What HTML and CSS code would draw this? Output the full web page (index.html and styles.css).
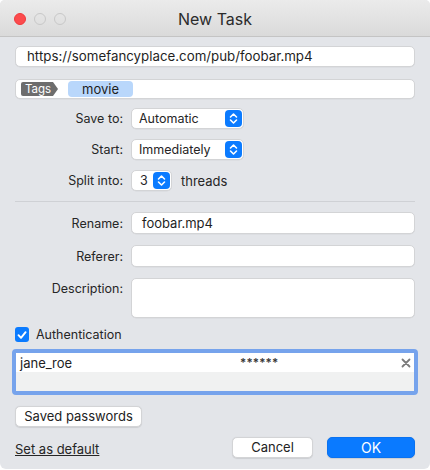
FILE: index.html
```html
<!DOCTYPE html>
<html lang="en">
<head>
<meta charset="utf-8">
<title>New Task</title>
<link rel="stylesheet" href="styles.css">
</head>
<body>
<div class="window">
  <div class="titlebar">
    <div class="lights">
      <span class="light red"></span>
      <span class="light"></span>
      <span class="light"></span>
    </div>
    <div class="title">New Task</div>
    <div></div>
  </div>
  <div class="content">
    <div class="field url">https://somefancyplace.com/pub/foobar.mp4</div>
    <div class="field tags">
      <span class="tag-label">Tags</span>
      <span class="chip">movie</span>
    </div>

    <div class="form options">
      <div class="label">Save to:</div>
      <div class="select wide"><span>Automatic</span><span class="stepper"><svg viewBox="0 0 17 17" width="17" height="17"><path d="M5.5 7 8.5 4 11.5 7M5.5 10 8.5 13 11.5 10" fill="none" stroke="#fff" stroke-width="1.6" stroke-linecap="round" stroke-linejoin="round"/></svg></span></div>
      <div class="label">Start:</div>
      <div class="select wide"><span>Immediately</span><span class="stepper"><svg viewBox="0 0 17 17" width="17" height="17"><path d="M5.5 7 8.5 4 11.5 7M5.5 10 8.5 13 11.5 10" fill="none" stroke="#fff" stroke-width="1.6" stroke-linecap="round" stroke-linejoin="round"/></svg></span></div>
      <div class="label">Split into:</div>
      <div class="split">
        <div class="select narrow"><span>3</span><span class="stepper"><svg viewBox="0 0 17 17" width="17" height="17"><path d="M5.5 7 8.5 4 11.5 7M5.5 10 8.5 13 11.5 10" fill="none" stroke="#fff" stroke-width="1.6" stroke-linecap="round" stroke-linejoin="round"/></svg></span></div>
        <span class="unit">threads</span>
      </div>
    </div>

    <div class="sep"></div>

    <div class="form details">
      <div class="label">Rename:</div>
      <div class="field input">foobar.mp4</div>
      <div class="label">Referer:</div>
      <div class="field input"></div>
      <div class="label top">Description:</div>
      <div class="field textarea"></div>
    </div>

    <div class="check">
      <span class="box"><svg viewBox="0 0 14 14" width="14" height="14"><path d="M3.5 7.2 6 9.8 10.6 4.2" fill="none" stroke="#fff" stroke-width="1.9" stroke-linecap="round" stroke-linejoin="round"/></svg></span>
      <span>Authentication</span>
    </div>

    <div class="auth">
      <div class="auth-row">
        <span class="user">jane_roe</span>
        <span class="pass">******</span>
        <span class="del"><svg viewBox="0 0 10 10" width="10" height="10"><path d="M1.5 1.5 8.5 8.5M8.5 1.5 1.5 8.5" stroke="#7b7b7b" stroke-width="1.8" stroke-linecap="round"/></svg></span>
      </div>
      <div class="auth-empty"></div>
    </div>

    <div class="btn saved">Saved passwords</div>

    <div class="footer">
      <a class="link">Set as default</a>
      <div class="actions">
        <div class="btn cancel">Cancel</div>
        <div class="btn primary">OK</div>
      </div>
    </div>
  </div>
</div>
</body>
</html>
```
FILE: styles.css
```css
* { box-sizing: border-box; }
html, body { margin: 0; padding: 0; background: #ffffff; }
body {
  font-family: Inter, "Liberation Sans", sans-serif;
  font-size: 12.5px;
  color: #262626;
}
.window {
  width: 430px;
  height: 469px;
  background: #e3e5e9;
  border-radius: 5px 5px 6px 6px;
  overflow: hidden;
}
.titlebar {
  height: 37px;
  display: grid;
  grid-template-columns: 1fr auto 1fr;
  align-items: center;
  background: linear-gradient(#ebebeb, #dadada);
  border-bottom: 1px solid #c4c4c4;
}
.lights { display: flex; gap: 8px; padding-left: 14px; padding-top: 2px; }
.light {
  width: 12px; height: 12px; border-radius: 50%;
  border: 1px solid #c8c8c8;
  background: transparent;
}
.light.red { background: #fc4b4d; border-color: #f0393c; }
.title { font-size: 16px; color: #2b2b2b; padding-top: 1px; }

.content { padding: 0 15px; }

.field {
  background: #fff;
  border: 1px solid #d3d4d6;
  border-radius: 5px;
  box-shadow: 0 0.5px 0.5px rgba(0,0,0,0.06);
}
.url {
  margin-top: 9px;
  height: 21px;
  line-height: 19px;
  padding-left: 11px;
  font-size: 13.3px;
  color: #1f1f1f;
}
.tags {
  margin-top: 12px;
  height: 20px;
  display: flex;
  align-items: center;
  padding-left: 5px;
  gap: 15px;
}
.tag-label {
  position: relative;
  height: 14px;
  line-height: 14px;
  padding: 0 0 0 4px;
  width: 32px;
  background: #6d6d6d;
  color: #fff;
  font-size: 11.5px;
  border-radius: 2px 0 0 2px;
}
.tag-label::after {
  content: "";
  position: absolute;
  right: -5px; top: 0;
  border-top: 7px solid transparent;
  border-bottom: 7px solid transparent;
  border-left: 5px solid #6d6d6d;
}
.chip {
  width: 65px;
  height: 16px;
  line-height: 16px;
  text-align: center;
  background: #b9d7fb;
  border-radius: 4px;
  font-size: 13px;
  color: #1e1e1e;
}

.form {
  display: grid;
  grid-template-columns: 108px 1fr;
  column-gap: 8px;
  align-items: center;
}
.options { margin-top: 9px; row-gap: 10px; grid-template-columns: 108px auto; justify-content: start; }
.label { text-align: right; color: #262626; }
.label.top { align-self: start; padding-top: 3px; }

.select {
  height: 21px;
  background: #fff;
  border: 1px solid #d3d4d6;
  border-radius: 5px;
  display: flex;
  align-items: center;
  justify-content: space-between;
  padding-left: 7px;
  padding-right: 1px;
  box-shadow: 0 0.5px 0.5px rgba(0,0,0,0.06);
}
.select.wide { width: 113px; }
.select.narrow { width: 41px; padding-left: 8px; }
.stepper {
  width: 17px; height: 17px;
  background: #0b7bff;
  border-radius: 4px;
  display: flex;
}
.split { display: flex; align-items: center; gap: 9px; }
.unit { color: #262626; font-size: 13px; }

.sep { height: 1px; background: #cfd1d5; margin: 10px 0 10px; }

.details { row-gap: 11px; }
.input { height: 22px; line-height: 20px; padding-left: 10px; font-size: 13px; color: #1f1f1f; }
.textarea { height: 40px; }

.check {
  margin-top: 9px;
  display: flex;
  align-items: center;
  gap: 7px;
  height: 15px;
}
.box {
  width: 14px; height: 15px;
  background: #0b7bff;
  border-radius: 3px;
  display: flex;
  align-items: center;
  justify-content: center;
}

.auth {
  margin: 7px -3px 0;
  height: 46px;
  border: 4px solid #76a3ec;
  border-radius: 4px;
  background: #f0f1f1;
}
.auth-row {
  height: 19px;
  background: #fff;
  display: grid;
  grid-template-columns: 220px 1fr 12px;
  align-items: center;
  padding: 0 4px;
}
.user { color: #222; font-size: 13px; }
.pass { font-size: 11.5px; font-weight: 600; color: #333; letter-spacing: 0.2px; }
.del { display: flex; justify-content: flex-end; margin-right: -1px; }

.btn {
  height: 21px;
  line-height: 19px;
  text-align: center;
  background: #fff;
  border: 1px solid #d3d4d6;
  border-radius: 5px;
  box-shadow: 0 0.5px 1px rgba(0,0,0,0.1);
  color: #222;
}
.saved { margin-top: 11px; width: 127px; font-size: 13px; }
.footer {
  margin-top: 10px;
  display: flex;
  justify-content: space-between;
  align-items: center;
}
.link { text-decoration: underline; color: #262626; margin-top: 3px; font-size: 13px; }
.actions { display: flex; gap: 14px; }
.cancel { width: 81px; font-size: 13px; }
.primary {
  width: 88px;
  background: #0a7aff;
  border-color: #0a72f0;
  color: #fff;
  font-size: 14px;
}
```
